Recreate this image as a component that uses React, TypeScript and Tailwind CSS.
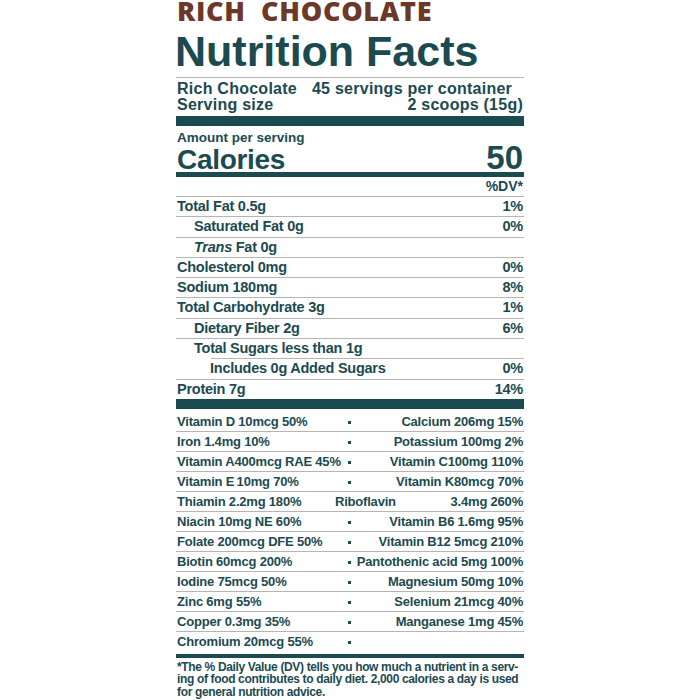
import React from "react";

const TEAL = "text-[#1b4a51]";

type Row = { label: React.ReactNode; dv?: string; indent?: 0 | 1 | 2; lineIndent?: boolean };

const rows: Row[] = [
  { label: "Total Fat 0.5g", dv: "1%" },
  { label: "Saturated Fat 0g", dv: "0%", indent: 1 },
  {
    label: (
      <>
        <span className="italic">Trans</span> Fat 0g
      </>
    ),
    indent: 1,
  },
  { label: "Cholesterol 0mg", dv: "0%" },
  { label: "Sodium 180mg", dv: "8%" },
  { label: "Total Carbohydrate 3g", dv: "1%" },
  { label: "Dietary Fiber 2g", dv: "6%", indent: 1 },
  { label: "Total Sugars less than 1g", indent: 1, lineIndent: true },
  { label: "Includes 0g Added Sugars", dv: "0%", indent: 2 },
];

type V = { l: string; r?: string; mid?: string };
const vit: V[] = [
  { l: "Vitamin D 10mcg 50%", r: "Calcium 206mg 15%" },
  { l: "Iron 1.4mg 10%", r: "Potassium 100mg 2%" },
  { l: "Vitamin A400mcg RAE 45%", r: "Vitamin C100mg 110%" },
  { l: "Vitamin E\u200910mg 70%", r: "Vitamin K80mcg 70%" },
  { l: "Thiamin 2.2mg 180%", mid: "Riboflavin", r: "3.4mg 260%" },
  { l: "Niacin 10mg NE 60%", r: "Vitamin B6 1.6mg 95%" },
  { l: "Folate 200mcg DFE 50%", r: "Vitamin B12 5mcg 210%" },
  { l: "Biotin 60mcg 200%", r: "Pantothenic acid 5mg 100%" },
  { l: "Iodine 75mcg 50%", r: "Magnesium 50mg 10%" },
  { l: "Zinc 6mg 55%", r: "Selenium 21mcg 40%" },
  { l: "Copper 0.3mg 35%", r: "Manganese 1mg 45%" },
];

function Dot() {
  return <span className="-ml-[2px] w-[2.5px] h-[2.5px] bg-[#1b4a51] translate-y-[1px]" />;
}

export default function App() {
  return (
    <div className="w-[700px] h-[700px] bg-white overflow-hidden">
      <div
        className={`w-[348px] mx-auto ${TEAL} font-bold`}
        style={{ fontFamily: '"Liberation Sans", Arial, sans-serif' }}
      >
        <div
          className="h-[22px] leading-[22px] text-[27px] font-extrabold text-[#6b3829] tracking-[0.7px] whitespace-nowrap pl-[1px]"
          style={{ fontFamily: '"Open Sans", sans-serif' }}
        >
          RICH&nbsp; CHOCOLATE
        </div>
        <div className="mt-[8px] h-[43px] leading-[43px] text-[43px] whitespace-nowrap -ml-[1px]">
          Nutrition Facts
        </div>
        <div className="mt-[4px] h-px bg-[#b5b5b5]" />
        <div className="pt-[2.5px] pb-[2.5px] px-[1px] text-[16px] leading-[16.5px] tracking-[0.25px]">
          <div className="flex gap-[15px] whitespace-nowrap">
            <span>Rich Chocolate</span>
            <span>45 servings per container</span>
          </div>
          <div className="flex justify-between whitespace-nowrap">
            <span>Serving size</span>
            <span>2 scoops (15g)</span>
          </div>
        </div>
        <div className="h-[10px] bg-[#1b4a51]" />
        <div className="pt-[5px] px-[1px] text-[13.5px] leading-[14px]">Amount per serving</div>
        <div className="mt-[1px] px-[1px] flex justify-between items-baseline h-[24px]">
          <span className="text-[28px] leading-[24px] tracking-[-0.3px]">Calories</span>
          <span className="text-[33px] leading-[24px]">50</span>
        </div>
        <div className="mt-[1.7px] h-[5px] bg-[#1b4a51]" />
        <div className="h-[20.3px] border-b border-[#b5b5b5] px-[1px] flex justify-end items-center text-[14px] leading-[19.3px]">
          %DV*
        </div>
        {rows.map((r, i) => (
          <div
            key={i}
            className={`h-[20.3px] flex text-[14.5px] leading-[19.3px] tracking-[-0.25px] ${
              r.lineIndent ? "" : "border-b border-[#b5b5b5]"
            }`}
          >
            <div
              className={`flex-1 flex justify-between items-center pr-[1px] whitespace-nowrap ${
                r.indent === 1 ? "pl-[18px]" : r.indent === 2 ? "pl-[34px]" : "pl-[1px]"
              }`}
            >
              {r.lineIndent ? (
                <div className="flex-1 flex flex-col">
                  <span className="h-[19.3px]">{r.label}</span>
                  <div className="ml-[17px] -mr-[1px] h-px bg-[#b5b5b5]" />
                </div>
              ) : (
                <>
                  <span>{r.label}</span>
                  <span>{r.dv ?? ""}</span>
                </>
              )}
            </div>
          </div>
        ))}
        <div className="h-[19px] px-[1px] flex justify-between items-center text-[14.5px] leading-[19px] tracking-[-0.25px]">
          <span>Protein 7g</span>
          <span>14%</span>
        </div>
        <div className="h-[10px] bg-[#1b4a51]" />
        <div className="pt-[3.5px] text-[13px] tracking-[-0.2px] whitespace-nowrap">
          {vit.map((v, i) => (
            <div key={i} className="h-[20px] border-b border-[#b5b5b5] grid grid-cols-2 items-center leading-[19px] px-[1px]">
              <span>{v.l}</span>
              <div className="flex justify-between items-center">
                {v.mid ? <span className="-ml-[15px]">{v.mid}</span> : <Dot />}
                <span>{v.r}</span>
              </div>
            </div>
          ))}
          <div className="h-[19px] grid grid-cols-2 items-center leading-[19px] px-[1px]">
            <span>Chromium 20mcg 55%</span>
            <div className="flex items-center">
              <Dot />
            </div>
          </div>
        </div>
        <div className="mt-[3px] h-[4px] bg-[#1b4a51]" />
        <div className="mt-[2.5px] px-[1px] text-[12px] leading-[12.5px] tracking-[-0.35px] whitespace-nowrap">
          <div>*The % Daily Value (DV) tells you how much a nutrient in a serv-</div>
          <div>ing of food contributes to daily diet. 2,000 calories a day is used</div>
          <div>for general nutrition advice.</div>
        </div>
      </div>
    </div>
  );
}
